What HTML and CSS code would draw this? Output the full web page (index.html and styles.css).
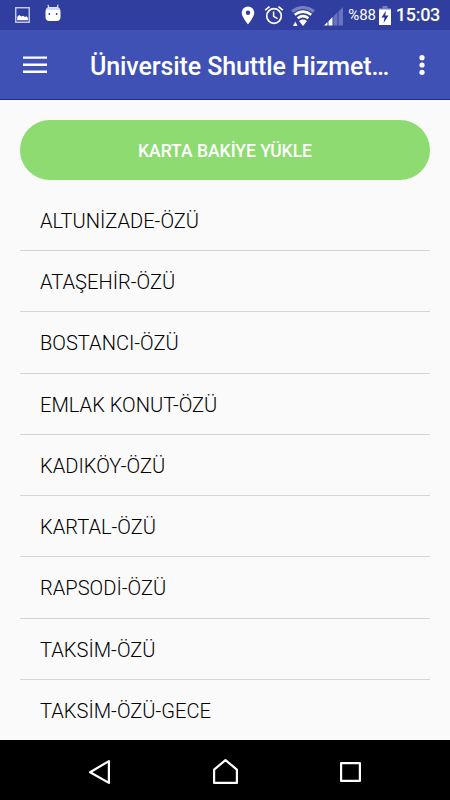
FILE: index.html
```html
<!DOCTYPE html>
<html lang="tr">
<head>
    <meta charset="utf-8">
    <title>Üniversite Shuttle Hizmetleri</title>
    <link rel="stylesheet" href="styles.css">
</head>
<body>
    <div class="status-bar">
        <svg class="icon-picture" width="15" height="16" viewBox="0 0 15 16">
            <rect x=".75" y=".75" width="13.5" height="14.5" fill="none" stroke="#d5daf6" stroke-width="1.3"/>
            <path d="M2.2 13.2V9.7L4.3 8l2 1.6L8 8.7l2 1.2 1.3-.6 1.6 1.5v2.4z" fill="#fff"/>
        </svg>
        <svg class="icon-android" width="16" height="18" viewBox="0 0 16 18">
            <path d="M4 4L2.9.7M12 4L13.1.7" stroke="#d5daf6" stroke-width="1.2"/>
            <path d="M.5 8Q.5 3.4 4 3h8q3.5.4 3.5 5v5q0 4-4 4h-7q-4 0-4-4z" fill="#fff"/>
            <path d="M1.2 6Q2 3.4 4 3.2h8q2 .2 2.8 2.8z" fill="#d5d9ef"/>
            <circle cx="4.3" cy="10" r=".9" fill="#303f9f"/>
            <circle cx="11.7" cy="10" r=".9" fill="#303f9f"/>
        </svg>
        <div class="status-right">
            <svg class="icon-pin" width="14" height="19" viewBox="0 0 14 19">
                <path fill="#fff" fill-rule="evenodd" d="M7 .5A6.3 6.3 0 0 0 .7 6.8C.7 11 7 18.5 7 18.5s6.3-7.5 6.3-11.7A6.3 6.3 0 0 0 7 .5zm0 4.1a2.2 2.2 0 1 1 0 4.4 2.2 2.2 0 0 1 0-4.4z"/>
            </svg>
            <svg class="icon-alarm" width="20" height="20" viewBox="0 0 20 20" fill="none" stroke="#fff">
                <circle cx="10" cy="11" r="7.3" stroke-width="1.7"/>
                <path d="M1.2 5.2L5.5 1.6M18.8 5.2l-4.3-3.6" stroke-width="1.7"/>
                <path d="M9.6 6.5v4.9l3.9 2.3" stroke-width="1.5"/>
            </svg>
            <svg class="icon-wifi" width="24" height="21" viewBox="0 0 24 21" fill="none">
                <path d="M1 5.5Q12-2.6 23 5.5" stroke="#7480c5" stroke-width="3"/>
                <path d="M3.7 8.8Q12 2.4 20.3 8.8M6.6 12.2Q12 8 17.4 12.2" stroke="#fff" stroke-width="2.5"/>
                <path d="M8 15q4-2.8 8 0l-4 5z" fill="#fff"/>
                <path d="M2 20l2.3-4.5L6.6 20z" fill="#fff"/>
            </svg>
            <svg class="icon-signal" width="20" height="19" viewBox="0 0 20 19">
                <path d="M0 18.5L3.5 15v3.5zM4.5 14.2L8.5 10v8.5h-4z" fill="#fff"/>
                <path d="M9.5 9.2l4-3.9v13.2h-4zM14.5 4.4L19 0v18.5h-4.5z" fill="#6874be"/>
            </svg>
            <span class="battery-percent">%88</span>
            <svg class="icon-battery" width="12" height="19" viewBox="0 0 12 19">
                <path d="M3.5 0h5v2.2H12V5H0V2.2h3.5z" fill="#7580c4"/>
                <path d="M0 3.5h12V19H0z" fill="#fff"/>
                <path d="M6.9 4.8L2.5 11.6h3L4.6 17l4.9-7.5H6.3z" fill="#26348c"/>
            </svg>
            <span class="clock">15:03</span>
        </div>
    </div>

    <div class="toolbar">
        <svg class="menu-icon" width="24" height="18" viewBox="0 0 24 18">
            <path d="M0 1.6h24M0 8.8h24M0 15.8h24" stroke="#fff" stroke-width="2.4"/>
        </svg>
        <div class="title">Üniversite Shuttle Hizmet…</div>
        <svg class="more-icon" width="6" height="20" viewBox="0 0 6 20" fill="#fff">
            <circle cx="3" cy="2.7" r="2.6"/>
            <circle cx="3" cy="10" r="2.6"/>
            <circle cx="3" cy="17.3" r="2.6"/>
        </svg>
    </div>

    <div class="content">
        <button class="load-btn">KARTA BAKİYE YÜKLE</button>
        <ul class="route-list">
            <li class="route">ALTUNİZADE-ÖZÜ</li>
            <li class="route">ATAŞEHİR-ÖZÜ</li>
            <li class="route">BOSTANCI-ÖZÜ</li>
            <li class="route">EMLAK KONUT-ÖZÜ</li>
            <li class="route">KADIKÖY-ÖZÜ</li>
            <li class="route">KARTAL-ÖZÜ</li>
            <li class="route">RAPSODİ-ÖZÜ</li>
            <li class="route">TAKSİM-ÖZÜ</li>
            <li class="route">TAKSİM-ÖZÜ-GECE</li>
        </ul>
    </div>

    <div class="nav-bar">
        <svg width="26" height="28" viewBox="0 0 26 28"><path d="M21.9 5.1v21.8L3.1 16.2z"/></svg>
        <svg width="26" height="28" viewBox="0 0 26 28"><path d="M2.1 26.9V13.7L13.5 4.1l11.4 9.6v13.2z"/></svg>
        <svg width="26" height="28" viewBox="0 0 26 28"><path d="M4.1 7.1h18.8v17.8H4.1z"/></svg>
    </div>
</body>
</html>
```
FILE: styles.css
```css
body {
    width: 100%;
    height: 100vh;
    margin: 0;
    font-family: Roboto, 'Liberation Sans', sans-serif;
    background: #fafafa;
    display: flex;
    flex-direction: column;
    overflow: hidden;
}
.status-bar {
    flex: none;
    height: 30px;
    padding: 0 10px 0 15px;
    box-sizing: border-box;
    background: #303f9f;
    color: white;
    display: flex;
    align-items: center;
}
.icon-android {
    margin: -4px 0 0 15px;
}
.status-right {
    margin-left: auto;
    display: flex;
    align-items: center;
}
.icon-alarm {
    margin-left: 9px;
}
.icon-wifi {
    margin: 3px 0 0 7px;
}
.icon-signal {
    margin: 2px 0 0 9px;
}
.battery-percent {
    margin-left: 4px;
    font-size: 15px;
    letter-spacing: -0.1px;
    line-height: 32px;
}
.icon-battery {
    margin-left: 3px;
}
.clock {
    margin-left: 5px;
    font-size: 18px;
    font-weight: 500;
    letter-spacing: -0.3px;
    line-height: 32px;
}
.toolbar {
    flex: none;
    height: 70px;
    padding: 0 25px 0 23px;
    box-sizing: border-box;
    background: #3f51b5;
    border-bottom: 1px solid #1b2d83;
    color: white;
    display: flex;
    align-items: center;
}
.title {
    flex: 1;
    margin-left: 43px;
    padding-top: 4px;
    font-size: 25px;
    font-weight: 500;
    letter-spacing: -0.1px;
    white-space: nowrap;
}
.content {
    flex: 1;
    min-height: 0;
    padding: 20px 20px 0;
    overflow: hidden;
}
.load-btn {
    display: block;
    width: 100%;
    height: 60px;
    padding-top: 3px;
    border: none;
    border-radius: 30px;
    background: #8ddb71;
    color: white;
    font-family: inherit;
    font-size: 17.5px;
    font-weight: 500;
    cursor: pointer;
}
.route-list {
    list-style: none;
    margin: 9.7px 0 0;
    padding: 0;
}
.route {
    height: 61.3px;
    padding-left: 20px;
    box-sizing: border-box;
    border-bottom: 1px solid #d5d5d5;
    font-size: 20.1px;
    font-weight: 350;
    line-height: 62px;
    color: #000;
}
.nav-bar {
    flex: none;
    height: 60px;
    padding: 0 87px;
    background: black;
    display: flex;
    align-items: center;
    justify-content: space-between;
}
.nav-bar svg {
    fill: none;
    stroke: white;
    stroke-width: 2.2;
    stroke-linejoin: round;
}
```
